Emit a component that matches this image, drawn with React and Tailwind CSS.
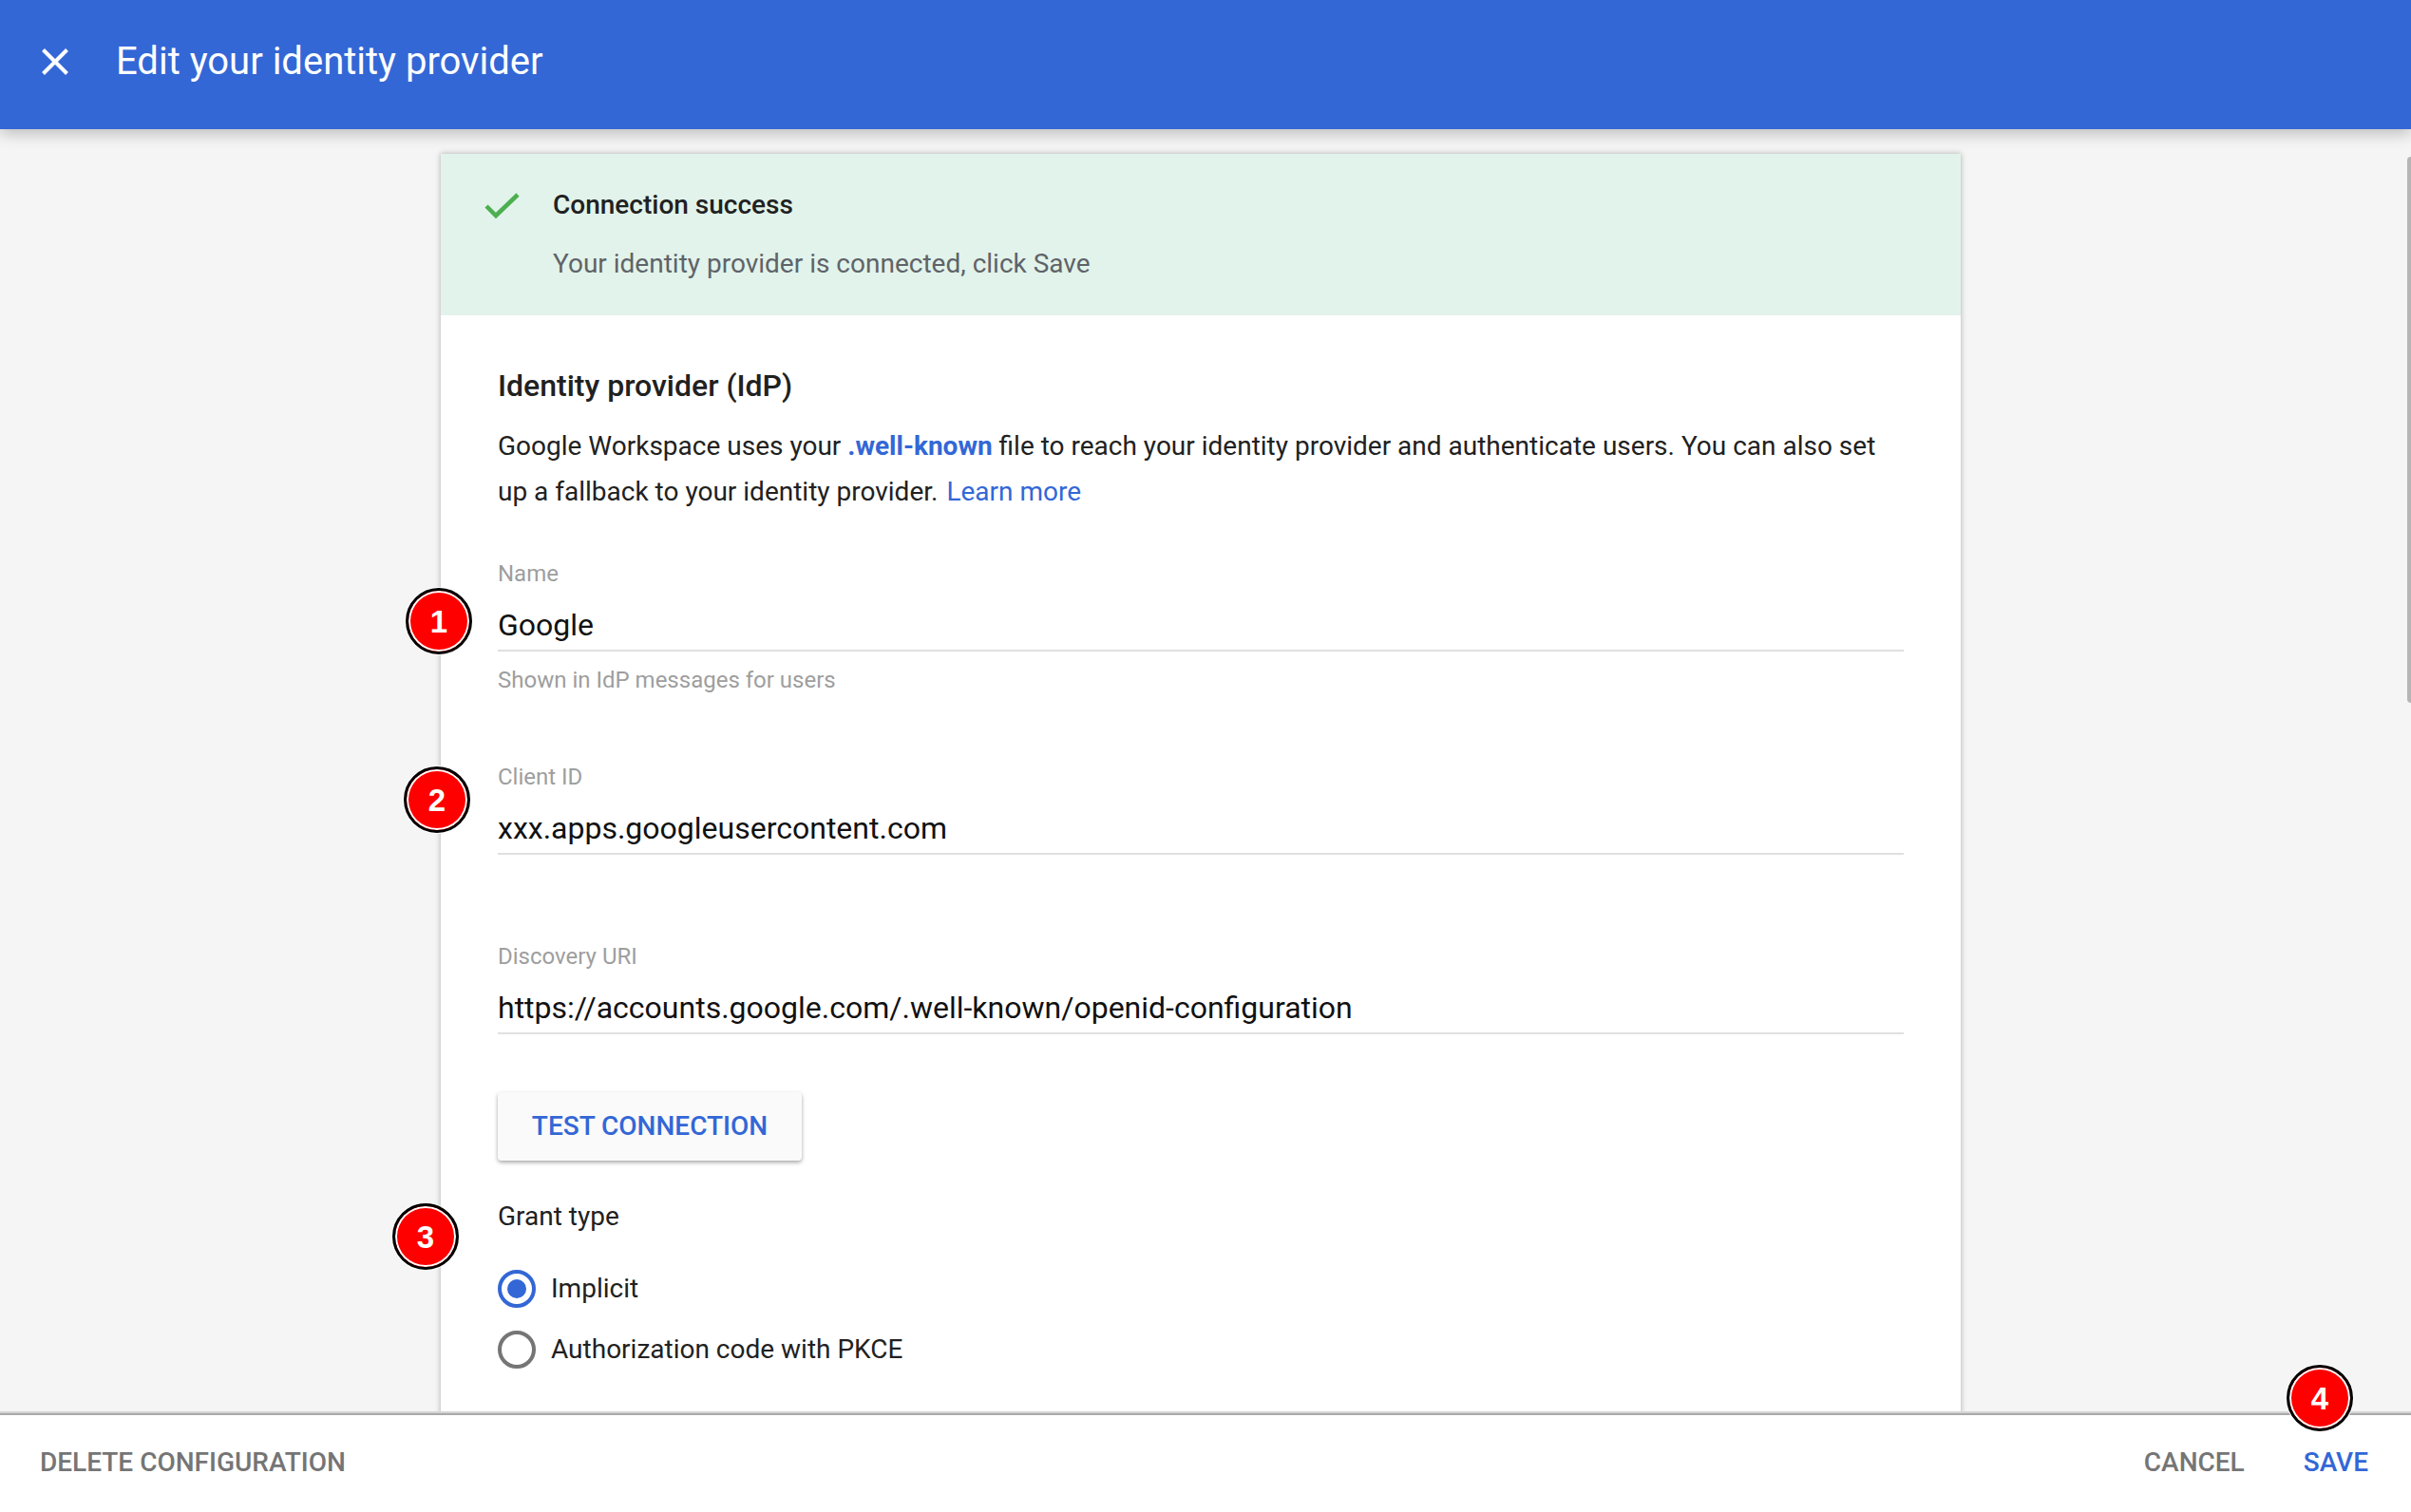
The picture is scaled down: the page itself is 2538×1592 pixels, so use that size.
const Badge = ({ n, className }) => (
  <div className={`absolute z-20 flex h-[70px] w-[70px] items-center justify-center rounded-full border-[3px] border-black bg-[#ff0000] pt-[1px] shadow-[inset_0_0_0_2px_#fff,0_0_0_1px_#fff] text-[33px] font-bold text-white ${className}`}
    style={{ fontFamily: "'Liberation Sans', Arial, sans-serif" }}>
    {n}
  </div>
)

const Field = ({ label, value, hint, className }) => (
  <div className={className}>
    <div className="text-[24px] leading-[32px] text-[#9e9e9e]">{label}</div>
    <div className="mt-[14px] h-[52px] border-b-2 border-[#e0e0e0] text-[32px] leading-[48px] text-[#111]">{value}</div>
    {hint && <div className="mt-[14px] text-[24px] leading-[32px] text-[#9e9e9e]">{hint}</div>}
  </div>
)

export default function App() {
  return (
    <div className="relative flex h-[1592px] w-[2538px] flex-col overflow-hidden bg-[#f5f5f5] font-['Roboto',sans-serif] text-[#212121]">
      {/* Barra superior */}
      <header className="z-10 flex h-[136px] shrink-0 items-center bg-[#3367d6] pb-[7px] shadow-[0_4px_16px_rgba(0,0,0,0.25)]">
        <button className="ml-[42px] flex h-[32px] w-[32px] items-center justify-center text-white">
          <svg width="32" height="32" viewBox="0 0 32 32" fill="none" stroke="currentColor" strokeWidth="4">
            <path d="M3.5 3.5 L28.5 28.5 M28.5 3.5 L3.5 28.5" />
          </svg>
        </button>
        <h1 className="ml-[48px] text-[40px] leading-[48px] text-white">Edit your identity provider</h1>
      </header>

      {/* Contenido */}
      <main className="relative flex-1 overflow-hidden">
        <div className="mt-[26px] ml-[464px] h-[1400px] w-[1600px] bg-white pb-[40px] shadow-[0_0_6px_rgba(0,0,0,0.3)]">
          <div className="flex h-[170px] bg-[#e2f3eb] pl-[44px] pt-[30px]">
            <svg className="mt-[11px]" width="40" height="32" viewBox="0 0 40 32" fill="none" stroke="#4caf50" strokeWidth="4.5">
              <path d="M4 14 L14 24 L37 2" />
            </svg>
            <div className="ml-[34px]">
              <div className="text-[28px] font-medium leading-[48px] text-[#212121]">Connection success</div>
              <div className="mt-[14px] text-[28px] leading-[48px] text-[#5f6368]">Your identity provider is connected, click Save</div>
            </div>
          </div>

          <div className="px-[60px] pt-[50px]">
            <h2 className="text-[32px] font-medium leading-[48px] text-[#212121]">Identity provider (IdP)</h2>
            <p className="mt-[16px] w-[1480px] text-[28px] leading-[48px] text-[#212121]">
              Google Workspace uses your <a className="font-bold text-[#3367d6]">.well-known</a> file to reach your identity provider and authenticate users. You can also set up a fallback to your identity provider.{" "}
              <a className="ml-[2px] text-[#3367d6]">Learn more</a>
            </p>

            <Field className="mt-[46px]" label="Name" value="Google" hint="Shown in IdP messages for users" />
            <Field className="mt-[70px]" label="Client ID" value="xxx.apps.googleusercontent.com" />
            <Field className="mt-[91px]" label="Discovery URI" value="https://accounts.google.com/.well-known/openid-configuration" />

            <button className="mt-[61px] flex h-[72px] w-[320px] items-center justify-center rounded-[4px] bg-[#fafafa] text-[28px] font-medium text-[#3367d6] shadow-[0_2px_4px_rgba(0,0,0,0.35)]">
              TEST CONNECTION
            </button>

            <div className="mt-[35px] text-[28px] leading-[48px] text-[#212121]">Grant type</div>
            <div className="mt-[32px] flex h-[40px] items-center">
              <span className="flex h-[40px] w-[40px] items-center justify-center rounded-full border-4 border-[#3367d6]">
                <span className="h-[20px] w-[20px] rounded-full bg-[#3367d6]" />
              </span>
              <span className="ml-[16px] text-[28px] text-[#212121]">Implicit</span>
            </div>
            <div className="mt-[24px] flex h-[40px] items-center">
              <span className="h-[40px] w-[40px] rounded-full border-4 border-[#757575]" />
              <span className="ml-[16px] text-[28px] text-[#212121]">Authorization code with PKCE</span>
            </div>
          </div>
        </div>
        {/* Barra de scroll */}
        <div className="absolute right-0 top-[29px] h-[575px] w-[4px] rounded-l-[4px] bg-[#b5b5b5]" />
      </main>

      {/* Pie */}
      <footer className="z-10 flex h-[106px] shrink-0 items-center justify-between border-t-[2px] border-[#d4d4d4] bg-white pl-[42px] pr-[45px] text-[28px] font-medium text-[#757575] shadow-[inset_0_2px_0_#a9a9a9]">
        <button>DELETE CONFIGURATION</button>
        <div className="flex gap-[62px]">
          <button>CANCEL</button>
          <button className="text-[#3367d6]">SAVE</button>
        </div>
      </footer>

      <Badge n="1" className="left-[427px] top-[619px]" />
      <Badge n="2" className="left-[425px] top-[807px]" />
      <Badge n="3" className="left-[413px] top-[1267px]" />
      <Badge n="4" className="left-[2407px] top-[1437px]" />
    </div>
  )
}
